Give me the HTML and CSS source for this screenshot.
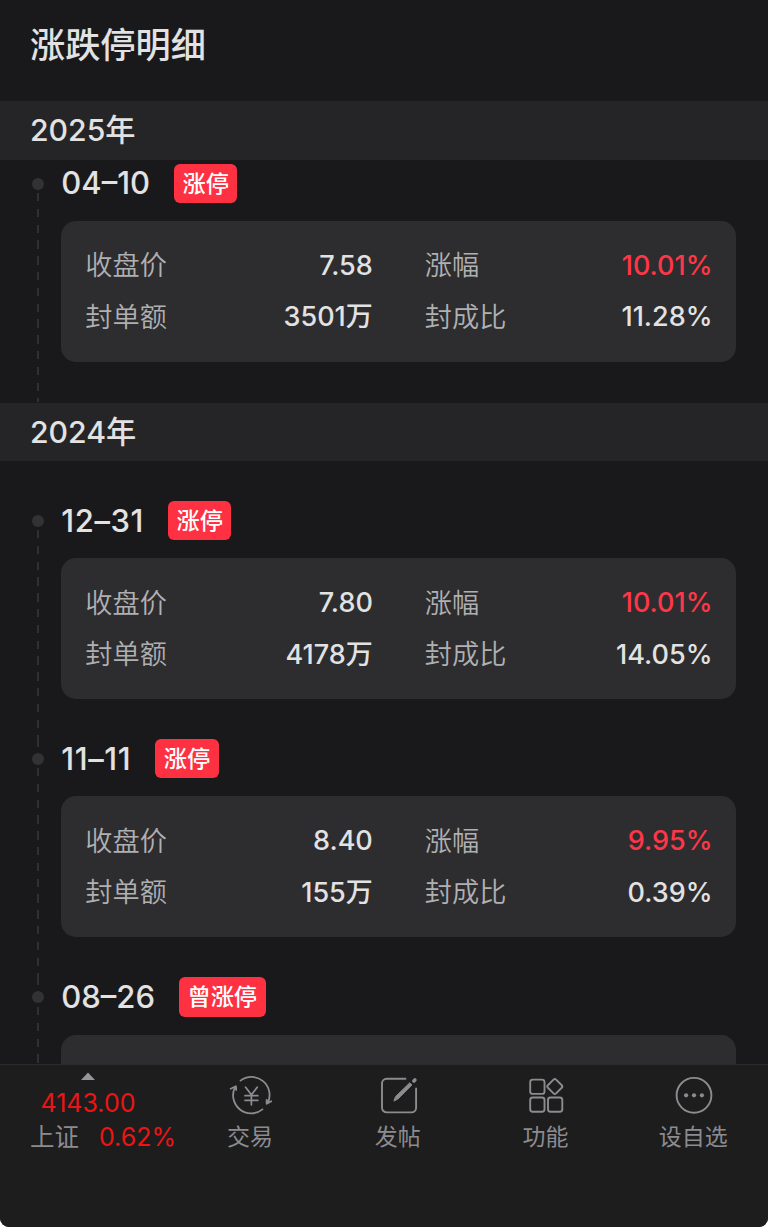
FILE: index.html
```html
<!DOCTYPE html>
<html lang="zh-CN">
<head>
<meta charset="utf-8">
<title>涨跌停明细</title>
<link rel="stylesheet" href="styles.css">
</head>
<body>
<div class="app">
  <main class="content">
    <h1 class="title">涨跌停明细</h1>

    <h2 class="year">2025年</h2>
    <section class="group group-first">
      <article class="entry">
        <div class="rail"><i class="lead lead-none"></i><i class="dot"></i><i class="line"></i></div>
        <div class="body">
          <header class="head"><span class="date">04–10</span><span class="badge">涨停</span></header>
          <dl class="card">
            <dt>收盘价</dt><dd>7.58</dd><dt class="second">涨幅</dt><dd class="up">10.01%</dd>
            <dt>封单额</dt><dd>3501万</dd><dt class="second">封成比</dt><dd>11.28%</dd>
          </dl>
        </div>
      </article>
    </section>

    <h2 class="year">2024年</h2>
    <section class="group">
      <article class="entry">
        <div class="rail"><i class="lead lead-none"></i><i class="dot"></i><i class="line"></i></div>
        <div class="body">
          <header class="head"><span class="date date-wide">12–31</span><span class="badge">涨停</span></header>
          <dl class="card">
            <dt>收盘价</dt><dd>7.80</dd><dt class="second">涨幅</dt><dd class="up">10.01%</dd>
            <dt>封单额</dt><dd>4178万</dd><dt class="second">封成比</dt><dd>14.05%</dd>
          </dl>
        </div>
      </article>
      <article class="entry">
        <div class="rail"><i class="lead"></i><i class="dot"></i><i class="line"></i></div>
        <div class="body">
          <header class="head"><span class="date date-wide">11–11</span><span class="badge">涨停</span></header>
          <dl class="card">
            <dt>收盘价</dt><dd>8.40</dd><dt class="second">涨幅</dt><dd class="up">9.95%</dd>
            <dt>封单额</dt><dd>155万</dd><dt class="second">封成比</dt><dd>0.39%</dd>
          </dl>
        </div>
      </article>
      <article class="entry">
        <div class="rail"><i class="lead"></i><i class="dot"></i><i class="line"></i></div>
        <div class="body">
          <header class="head"><span class="date">08–26</span><span class="badge">曾涨停</span></header>
          <dl class="card"></dl>
        </div>
      </article>
    </section>
  </main>

  <nav class="tabs">
    <div class="index">
      <svg class="caret" width="14" height="8" viewBox="0 0 14 8"><path d="M7 .5 14 8H0z" fill="#96969b"/></svg>
      <span class="point">4143.00</span>
      <span class="row"><span class="name">上证</span><span class="rate">0.62%</span></span>
    </div>
    <a class="tab">
      <svg class="icon" viewBox="0 0 44 40" fill="none" stroke="#8b8b90" stroke-width="1.8" stroke-linecap="round" stroke-linejoin="round">
        <path d="M12.500 5.600A18.100 18.100 0 0 1 39.600 28.200M43.500 26.300 38.700 28.800 38.600 25"/>
        <path d="M34.500 34.400A18.100 18.100 0 0 1 7.200 11.800M2.700 13.700 7.900 11.200 8.200 15"/>
        <path d="m17.600 12.300 5.800 7.500 5.800-7.500M23.400 19.800v10M17 20.700h12.800M17 25.300h12.800"/>
      </svg>
      <span>交易</span>
    </a>
    <a class="tab">
      <svg class="icon" viewBox="0 0 44 40" fill="none" stroke="#8b8b90" stroke-width="1.9" stroke-linecap="round" stroke-linejoin="round">
        <path d="M29.500 3.700H10.700A4.700 4.700 0 0 0 6 8.400v24.300A4.700 4.700 0 0 0 10.700 37.400h24.700a4.700 4.700 0 0 0 4.700-4.700V13.500"/>
        <path d="m18 25.700 1.600-4.200L33.800 7.800l2.100 2.100L22 23.900z" fill="#8b8b90" stroke-width="1"/>
        <path d="m37.900 6 1-1" stroke-width="3.600"/>
      </svg>
      <span>发帖</span>
    </a>
    <a class="tab">
      <svg class="icon" viewBox="0 0 44 40" fill="none" stroke="#8b8b90" stroke-width="1.9" stroke-linejoin="round">
        <rect x="7.200" y="4.600" width="14.300" height="14.300" rx="2.500"/>
        <rect x="7.200" y="22.500" width="14.300" height="14.300" rx="2.500"/>
        <rect x="25" y="22.500" width="14.300" height="14.300" rx="2.500"/>
        <rect x="26" y="5.700" width="11.600" height="11.600" rx="1.800" transform="rotate(45 31.800 11.500)"/>
      </svg>
      <span>功能</span>
    </a>
    <a class="tab">
      <svg class="icon" viewBox="0 0 44 40" fill="none" stroke="#8b8b90" stroke-width="1.900">
        <circle cx="23" cy="20.300" r="17.400"/>
        <g fill="#8b8b90" stroke="none"><circle cx="15.100" cy="20.300" r="2.100"/><circle cx="23" cy="20.300" r="2.100"/><circle cx="30.900" cy="20.300" r="2.100"/></g>
      </svg>
      <span>设自选</span>
    </a>
  </nav>
</div>
</body>
</html>
```
FILE: styles.css
```css
* { box-sizing: border-box; margin: 0; padding: 0; }
body {
  background: #fff;
  font-family: Inter, "Noto Sans CJK SC", sans-serif;
  color: #e2e2e3;
}
.app {
  display: flex;
  flex-direction: column;
  height: 1227px;
  overflow: hidden;
  background: #19191b;
  border-radius: 0 0 9px 9px;
}
.content { flex: 1; min-height: 0; overflow: hidden; }
.title {
  height: 101px;
  padding: 18px 0 0 30px;
  font-size: 35.200px;
  line-height: 54px;
  font-weight: 500;
}
.year {
  height: 58.700px;
  padding-left: 30px;
  background: #252527;
  font-size: 30.200px;
  line-height: 59px;
  font-weight: 450;
}
.group { padding-top: 39.400px; }
.group-first { height: 243px; padding-top: 4px; }
.entry { display: flex; height: 238.200px; }
.rail {
  display: flex;
  flex-direction: column;
  align-items: center;
  width: 12px;
  margin: 0 24px 0 31.500px;
}
.lead { width: 2px; height: 8px; margin-bottom: 6px; background: #303032; }
.lead-none { visibility: hidden; }
.dot { width: 12px; height: 12px; border-radius: 50%; background: #323234; }
.line {
  flex: 1;
  width: 2px;
  margin-top: 3.500px;
  background: repeating-linear-gradient(#303032 0 8.400px, transparent 8.400px 15.800px);
}
.body { width: 674.700px; margin-left: -6.200px; }
.head { display: flex; align-items: center; height: 39.500px; }
.date { font-size: 31px; line-height: 40px; font-weight: 450; font-kerning: none; }
.date-wide { letter-spacing: .6px; }
.badge {
  height: 39.500px;
  margin-left: 24px;
  padding: 0 8.500px;
  border-radius: 6px;
  background: #fe3142;
  color: #fff;
  font-size: 23.200px;
  line-height: 41px;
  font-weight: 500;
}
.card {
  display: grid;
  grid-template-columns: 110px 177.500px 165px 1fr;
  grid-auto-rows: 51.500px;
  align-items: center;
  height: 141px;
  margin-top: 18px;
  padding: 18px 23.500px 18px 24px;
  border-radius: 15px;
  background: #2d2d2f;
  font-size: 27px;
  line-height: 51px;
}
dt { padding-top: 2px; color: #b0b0b2; font-size: 27.200px; font-weight: 350; }
dt.second { padding-left: 52px; }
dd { padding-top: 1px; text-align: right; font-weight: 450; }
.up { color: #fe3748; }
.tabs {
  display: flex;
  height: 163px;
  border-top: 1px solid #2b2b2d;
  background: #1d1d1e;
  color: #8b8b90;
}
.index { display: flex; flex-direction: column; align-items: center; width: 176px; padding-top: 7px; }
.caret { display: block; }
.point, .rate { color: #ea1515; font-size: 25px; }
.point { line-height: 34px; margin-top: 6px; }
.row { display: flex; width: 100%; align-items: center; line-height: 35px; padding-left: 30px; }
.name { width: 70px; font-size: 24.500px; }
.tab { display: flex; flex-direction: column; align-items: center; width: 147.800px; padding-top: 10px; font-size: 23px; line-height: 34px; }
.icon { width: 44px; height: 40px; margin-bottom: 5px; }
```
